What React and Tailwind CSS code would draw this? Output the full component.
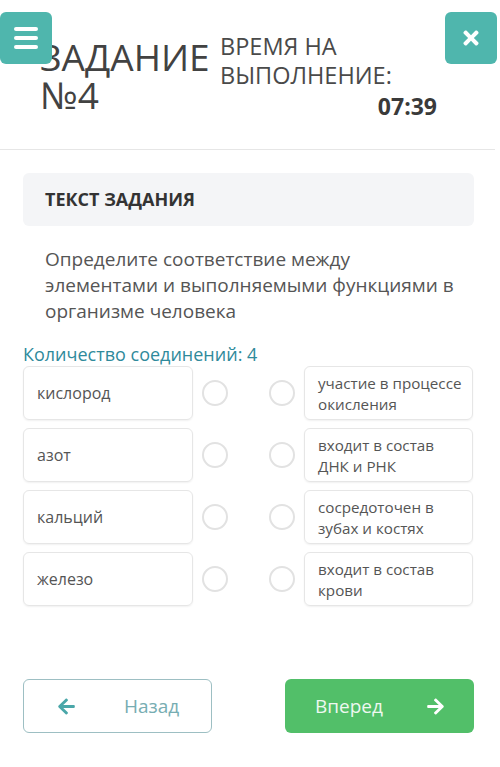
import { FaArrowLeft, FaArrowRight, FaTimes } from 'react-icons/fa';

const pairs = [
  { left: 'кислород', right: 'участие в процессе окисления' },
  { left: 'азот', right: 'входит в состав ДНК и РНК' },
  { left: 'кальций', right: 'сосредоточен в зубах и костях' },
  { left: 'железо', right: 'входит в состав крови' },
];

const Circle = () => (
  <div className="w-[26px] h-[26px] rounded-full border-2 border-[#e2e2e2] bg-white shrink-0" />
);

const App = () => {
  return (
    <div
      className="w-[500px] min-h-[767px] bg-white text-[#444]"
      style={{ fontFamily: '"Open Sans", "Noto Sans", sans-serif' }}
    >
      {/* header */}
      <div className="relative h-[150px] border-b border-[#e6e6e6] mr-[5px] flex items-start">
        <div className="mt-[38px] ml-[40px] w-[180px] text-[37px] leading-[38px] text-[#424242]">
          <div>ЗАДАНИЕ</div>
          <div>№4</div>
        </div>
        <div className="mt-[32px] w-[217px] text-[#4a4a4a]">
          <div className="text-[23.5px] leading-[29px]">ВРЕМЯ НА</div>
          <div className="text-[23.5px] leading-[29px]">ВЫПОЛНЕНИЕ:</div>
          <div className="mt-[2px] text-right text-[23px] leading-[29px] font-bold text-[#3a3a3a]">
            07:39
          </div>
        </div>

        <button className="absolute left-0 top-[12px] w-[52px] h-[52px] rounded-md bg-[#4fb6ad] flex items-center justify-center">
          <svg width="26" height="24" viewBox="0 0 26 24">
            <g stroke="#ffffff" strokeWidth="4" strokeLinecap="round">
              <line x1="3" y1="3" x2="23" y2="3" />
              <line x1="3" y1="12" x2="23" y2="12" />
              <line x1="3" y1="21" x2="23" y2="21" />
            </g>
          </svg>
        </button>
        <button className="absolute left-[445px] top-[12px] w-[52px] h-[52px] rounded-md bg-[#4fb6ad] flex items-center justify-center">
          <FaTimes className="text-white text-[22px]" />
        </button>
      </div>

      {/* task */}
      <div className="pl-[23px] pr-[26px]">
        <div className="mt-[23px] h-[53px] rounded-md bg-[#f4f5f7] px-[22px] flex items-center">
          <h3 className="text-[18px] font-bold text-[#333]">ТЕКСТ ЗАДАНИЯ</h3>
        </div>
        <p className="mt-[20px] pl-[22px] pr-[4px] text-[19px] leading-[26px] text-[#555]">
          Определите соответствие между
          <br />
          элементами и выполняемыми функциями в
          <br />
          организме человека
        </p>
        <div className="mt-[18px] text-[18px] leading-[24px] text-[#2f8a9b]">
          Количество соединений: 4
        </div>

        {/* pairs */}
        <div className="flex flex-col gap-[8px]">
          {pairs.map((pair) => (
            <div key={pair.left} className="flex items-center h-[54px]">
              <div className="w-[170px] h-full rounded-md border border-[#e6e6e6] shadow-[0_1px_2px_rgba(0,0,0,0.06)] px-[13px] flex items-center text-[16px] text-[#555]">
                {pair.left}
              </div>
              <div className="ml-[9px]">
                <Circle />
              </div>
              <div className="ml-[41px]">
                <Circle />
              </div>
              <div className="ml-[9px] w-[169px] h-full rounded-md border border-[#e6e6e6] shadow-[0_1px_2px_rgba(0,0,0,0.06)] pl-[13px] pr-[4px] pt-[6px] text-[15.2px] leading-[21px] text-[#555]">
                {pair.right}
              </div>
            </div>
          ))}
        </div>

        {/* navigation */}
        <div className="mt-[73px] flex justify-between">
          <button className="w-[189px] h-[54px] rounded-md border border-[#9dbfc3] flex items-center">
            <FaArrowLeft className="ml-[33px] text-[#4aa7a9] text-[19px]" />
            <span className="ml-[48px] text-[19px] text-[#77adb2]">Назад</span>
          </button>
          <button className="w-[189px] h-[54px] rounded-md bg-[#52bf69] flex items-center">
            <span className="ml-[30px] text-[19px] text-[#eef8f0]">Вперед</span>
            <FaArrowRight className="ml-[43px] text-white text-[19px]" />
          </button>
        </div>
      </div>
    </div>
  );
};

export default App;
